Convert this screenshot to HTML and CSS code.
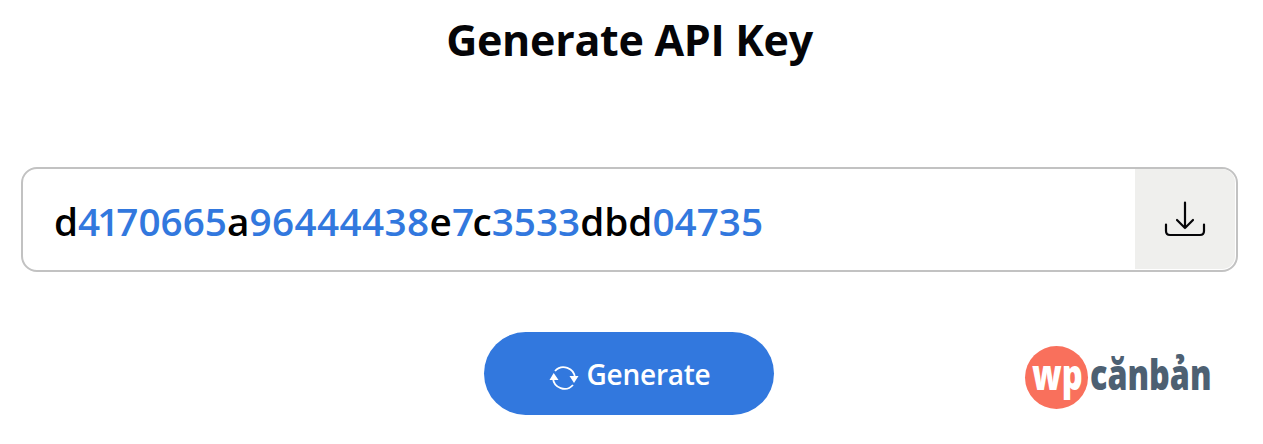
FILE: index.html
```
<!DOCTYPE html>
<html lang="en">
<head>
  <meta charset="UTF-8" />
  <meta name="viewport" content="width=device-width, initial-scale=1.0" />
  <title>Generate API Key</title>
  <link rel="stylesheet" href="styles.css">
</head>
<body>

  <h1 class="title">Generate API Key</h1>

  <!-- key field -->
  <div class="key-box">
    <div class="key-value">d<span><span class="narrow">41</span>70665</span>a<span class="wide">96444438</span>e<span class="tight">7</span>c<span>3533</span>dbd<span>04735</span></div>
    <button class="download-btn" aria-label="Download">
      <svg width="42" height="38" viewBox="0 0 42 38" fill="none" stroke="#050508" stroke-width="2.200" stroke-linecap="round" stroke-linejoin="round">
        <path d="M21 2.500v25.500M13 20l8 8 8-8M2 24.500v6.500q0 4 4 4h30q4 0 4-4v-6.500"/>
      </svg>
    </button>
  </div>

  <!-- actions -->
  <div class="actions">
    <button class="generate-btn">
      <svg width="30" height="26" viewBox="0 0 30 26" fill="none" stroke="#fff" stroke-width="1.800">
        <path d="M6 6A11.500 11.500 0 0 1 26 13M24 20A11.500 11.500 0 0 1 4 13"/>
        <path d="M20.500 11h9l-4.500 7zM.5 15h9L4.700 8z" fill="#fff" stroke="none"/>
      </svg>
      <span>Generate</span>
    </button>

    <svg class="logo" width="190" height="66" viewBox="0 0 190 66">
      <circle cx="32.500" cy="32.500" r="31.500" fill="#f9705c"/>
      <text class="logo-wp" transform="translate(8 45) scale(.78 1)" textLength="65" lengthAdjust="spacingAndGlyphs">wp</text>
      <text class="logo-name" transform="translate(66 45) scale(.76 1)" textLength="160" lengthAdjust="spacingAndGlyphs">cănbản</text>
    </svg>
  </div>

</body>
</html>
```
FILE: styles.css
```
*{box-sizing:border-box}
body{
  margin:0;
  height:444px;
  overflow:hidden;
  background:#fff;
  color:#050508;
  font-family:"Open Sans","Noto Sans",sans-serif;
}
button{
  margin:0;
  padding:0;
  border:none;
  font-family:inherit;
  cursor:pointer;
}
svg{display:block}

/* ===== title ===== */
.title{
  margin:0;
  padding:10px 4px 0 0;
  height:167px;
  font-size:43px;
  line-height:60px;
  font-weight:700;
  letter-spacing:-.3px;
  text-align:center;
}

/* ===== key field ===== */
.key-box{
  display:flex;
  height:105px;
  margin:0 25px 0 21px;
  padding:0 1px 1px 0;
  border:2px solid #c2c2c2;
  border-radius:16px;
}
.key-value{
  flex:1;
  padding-left:31px;
  font-size:38.7px;
  line-height:104px;
  font-weight:600;
  color:#000;
  white-space:nowrap;
}
.key-value span{color:#3278de}
.key-value .narrow{letter-spacing:-3px}
.key-value .wide{letter-spacing:.4px}
.key-value .tight{letter-spacing:-1.5px}
.download-btn{
  display:flex;
  align-items:center;
  justify-content:center;
  width:100px;
  background:#efefed;
  border-radius:0 13px 13px 0;
}

/* ===== actions ===== */
.actions{
  display:grid;
  grid-template-columns:484px 290px 1fr;
  padding-top:60px;
}
.generate-btn{
  grid-column:2;
  display:flex;
  align-items:center;
  justify-content:center;
  gap:8px;
  height:83px;
  padding:1px 0 0 1px;
  background:#3278de;
  border-radius:42px;
  color:#fff;
  font-size:28px;
  font-weight:600;
  letter-spacing:-.25px;
}
.generate-btn svg{margin-top:8px}

/* ===== logo ===== */
.logo{
  margin:13px 0 0 250px;
  overflow:visible;
}
.logo text{
  font-size:42px;
  font-weight:800;
}
.logo-wp{fill:#fff}
.logo-name{fill:#4d6072}
```
